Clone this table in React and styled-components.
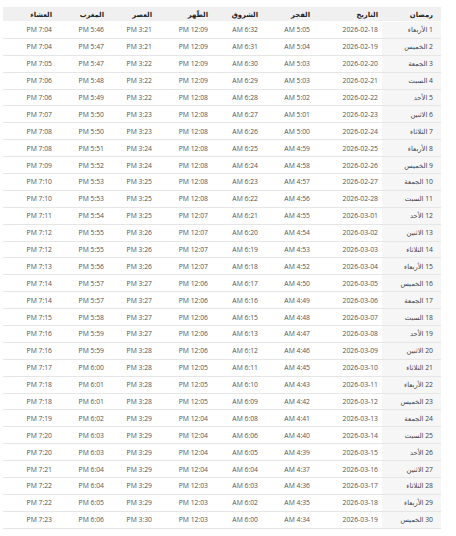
import React from 'react'
import styled, { createGlobalStyle } from 'styled-components';

const GlobalStyle = createGlobalStyle`
  body {
    margin: 0;
    background: #fff;
  }
`;

const Page = styled.div`
  direction: rtl;
  padding: 7px 15px 0 3px;
  font-family: "Open Sans", "DejaVu Sans", sans-serif;
`;

const Table = styled.table`
  width: 438px;
  table-layout: fixed;
  border-collapse: collapse;
  font-size: 6.8px;
`;

const Head = styled.th`
  height: 14px;
  padding: 0 ${p => p.$first ? '8px' : '4px'} 0 0;
  background: #f0f0f0;
  color: #222;
  font-weight: 700;
  text-align: right;
  border-bottom: 1.5px solid #fff;
`;

const Cell = styled.td`
  height: 15.9px;
  padding: 0 ${p => p.$first ? '8px' : '4px'} 0 0;
  background: ${p => p.$first ? '#f6f6f6' : 'transparent'};
  color: ${p => p.$first ? '#444' : '#555'};
  text-align: right;
  white-space: nowrap;
  border-bottom: 1px solid #e6e6e6;
`;

// right to left
const cols = [59, 68, 52, 50, 56, 48, 52, 53];
const heads = ['رمضان', 'التاريخ', 'الفجر', 'الشروق', 'الظّهر', 'العصر', 'المغرب', 'العشاء'];
const days = ['الأربعاء', 'الخميس', 'الجمعة', 'السبت', 'الأحد', 'الاثنين', 'الثلاثاء'];

// date, fajr, shuruq, dhuhr, asr, maghrib, isha
const rows = [
  ['2026-02-18', '5:05', '6:32', '12:09', '3:21', '5:46', '7:04'],
  ['2026-02-19', '5:04', '6:31', '12:09', '3:21', '5:47', '7:04'],
  ['2026-02-20', '5:03', '6:30', '12:09', '3:22', '5:47', '7:05'],
  ['2026-02-21', '5:03', '6:29', '12:09', '3:22', '5:48', '7:06'],
  ['2026-02-22', '5:02', '6:28', '12:08', '3:22', '5:49', '7:06'],
  ['2026-02-23', '5:01', '6:27', '12:08', '3:23', '5:50', '7:07'],
  ['2026-02-24', '5:00', '6:26', '12:08', '3:23', '5:50', '7:08'],
  ['2026-02-25', '4:59', '6:25', '12:08', '3:24', '5:51', '7:08'],
  ['2026-02-26', '4:58', '6:24', '12:08', '3:24', '5:52', '7:09'],
  ['2026-02-27', '4:57', '6:23', '12:08', '3:25', '5:53', '7:10'],
  ['2026-02-28', '4:56', '6:22', '12:08', '3:25', '5:53', '7:10'],
  ['2026-03-01', '4:55', '6:21', '12:07', '3:25', '5:54', '7:11'],
  ['2026-03-02', '4:54', '6:20', '12:07', '3:26', '5:55', '7:12'],
  ['2026-03-03', '4:53', '6:19', '12:07', '3:26', '5:55', '7:12'],
  ['2026-03-04', '4:52', '6:18', '12:07', '3:26', '5:56', '7:13'],
  ['2026-03-05', '4:50', '6:17', '12:06', '3:27', '5:57', '7:14'],
  ['2026-03-06', '4:49', '6:16', '12:06', '3:27', '5:57', '7:14'],
  ['2026-03-07', '4:48', '6:15', '12:06', '3:27', '5:58', '7:15'],
  ['2026-03-08', '4:47', '6:13', '12:06', '3:27', '5:59', '7:16'],
  ['2026-03-09', '4:46', '6:12', '12:06', '3:28', '5:59', '7:16'],
  ['2026-03-10', '4:45', '6:11', '12:05', '3:28', '6:00', '7:17'],
  ['2026-03-11', '4:43', '6:10', '12:05', '3:28', '6:01', '7:18'],
  ['2026-03-12', '4:42', '6:09', '12:05', '3:28', '6:01', '7:18'],
  ['2026-03-13', '4:41', '6:08', '12:04', '3:29', '6:02', '7:19'],
  ['2026-03-14', '4:40', '6:06', '12:04', '3:29', '6:03', '7:20'],
  ['2026-03-15', '4:39', '6:05', '12:04', '3:29', '6:03', '7:20'],
  ['2026-03-16', '4:37', '6:04', '12:04', '3:29', '6:04', '7:21'],
  ['2026-03-17', '4:36', '6:03', '12:03', '3:29', '6:04', '7:22'],
  ['2026-03-18', '4:35', '6:02', '12:03', '3:29', '6:05', '7:22'],
  ['2026-03-19', '4:34', '6:00', '12:03', '3:30', '6:06', '7:23'],
];

const ampm = (t, i) => (i < 2 ? `${t} AM` : `${t} PM`);

export default function App() {
  return (
    <Page>
      <GlobalStyle />
      <Table>
        <colgroup>
          {cols.map((w, i) => <col key={i} style={{ width: w }} />)}
        </colgroup>
        <thead>
          <tr>
            {heads.map((h, i) => <Head key={h} $first={i === 0}>{h}</Head>)}
          </tr>
        </thead>
        <tbody>
          {rows.map(([date, ...times], r) => (
            <tr key={date}>
              <Cell $first>{`${r + 1} ${days[r % 7]}`}</Cell>
              <Cell>{date}</Cell>
              {times.map((t, i) => <Cell key={i}>{ampm(t, i)}</Cell>)}
            </tr>
          ))}
        </tbody>
      </Table>
    </Page>
  )
}
